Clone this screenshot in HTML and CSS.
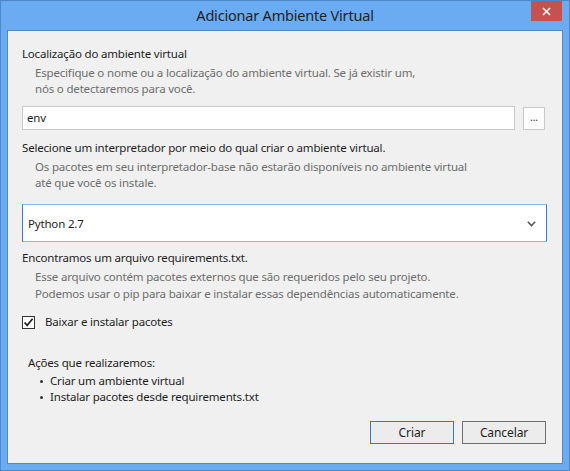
FILE: index.html
```html
<!DOCTYPE html>
<html lang="pt">
<head>
<meta charset="utf-8">
<title>Adicionar Ambiente Virtual</title>
<link rel="stylesheet" href="styles.css">
</head>
<body>
<div class="window">
  <div class="titlebar">
    <span class="spacer"></span>
    <span class="title">Adicionar Ambiente Virtual</span>
    <button class="close" aria-label="Fechar">
      <svg width="9" height="9" viewBox="0 0 9 9"><path d="M1 1 L8 8 M8 1 L1 8" stroke="#fff" stroke-width="1.6" fill="none"/></svg>
    </button>
  </div>
  <div class="content">
    <div class="heading h-first">Localização do ambiente virtual</div>
    <div class="desc">Especifique o nome ou a localização do ambiente virtual. Se já existir um,<br>nós o detectaremos para você.</div>
    <div class="path-row">
      <div class="textbox">env</div>
      <div class="browse">...</div>
    </div>

    <div class="heading h-second">Selecione um interpretador por meio do qual criar o ambiente virtual.</div>
    <div class="desc">Os pacotes em seu interpretador-base não estarão disponíveis no ambiente virtual<br>até que você os instale.</div>
    <div class="select">
      <span>Python 2.7</span>
      <svg class="chevron" width="9" height="6" viewBox="0 0 9 6"><path d="M0.8 0.8 L4.5 4.6 L8.2 0.8" stroke="#555" stroke-width="1.5" fill="none"/></svg>
    </div>

    <div class="heading h-third">Encontramos um arquivo requirements.txt.</div>
    <div class="desc desc-tight">Esse arquivo contém pacotes externos que são requeridos pelo seu projeto.<br>Podemos usar o pip para baixar e instalar essas dependências automaticamente.</div>

    <label class="check-row">
      <span class="checkbox">
        <svg width="11" height="11" viewBox="0 0 11 11"><path d="M1.5 5.5 L4.2 8.4 L9.6 1.8" stroke="#222" stroke-width="1.7" fill="none"/></svg>
      </span>
      <span>Baixar e instalar pacotes</span>
    </label>

    <div class="actions">
      <div class="actions-title">Ações que realizaremos:</div>
      <ul class="action-list">
        <li>Criar um ambiente virtual</li>
        <li>Instalar pacotes desde requirements.txt</li>
      </ul>
    </div>

    <div class="buttons">
      <button class="btn btn-default">Criar</button>
      <button class="btn">Cancelar</button>
    </div>
  </div>
</div>
</body>
</html>
```

FILE: styles.css
```css
* { box-sizing: border-box; }

html, body {
  margin: 0;
  padding: 0;
}

body {
  width: 570px;
  height: 471px;
  font-family: "Noto Sans", "Open Sans", sans-serif;
  font-size: 11.5px;
  letter-spacing: -0.18px;
  color: #1e1e1e;
  background: #6aabf2;
}

.window {
  width: 570px;
  height: 471px;
  border: 1px solid #4f86c6;
  background: #6aabf2;
  display: flex;
  flex-direction: column;
  padding: 0 6px 6px 6px;
}

.titlebar {
  height: 29px;
  flex: none;
  display: grid;
  grid-template-columns: 1fr auto 1fr;
  align-items: start;
  margin: 0 -6px;
}

.title {
  font-size: 14.5px;
  letter-spacing: -0.2px;
  line-height: 29px;
  color: #1f1f1f;
}

.close {
  justify-self: end;
  width: 31px;
  height: 20px;
  margin-right: 7px;
  border: 0;
  padding: 0;
  background: #c75050;
  display: flex;
  align-items: center;
  justify-content: center;
}

.content {
  flex: 1;
  border: 1px solid #5088c8;
  background: #f0f0f0;
  padding: 15px 15px 0 14px;
  display: flex;
  flex-direction: column;
}

.heading {
  line-height: 16px;
  color: #1e1e1e;
}

.h-second { margin-top: 10px; }
.h-third { margin-top: 8px; }

.desc {
  margin-top: 3px;
  padding-left: 13px;
  line-height: 16px;
  color: #6d6d6d;
}

.desc-tight { margin-top: 2px; line-height: 17px; }

.path-row {
  margin-top: 9px;
  display: flex;
  gap: 8px;
  align-items: flex-start;
}

.textbox {
  flex: 1;
  height: 24px;
  border: 1px solid #c8c8c8;
  background: #fff;
  padding: 0 4px;
  line-height: 22px;
}

.browse {
  width: 22px;
  height: 23px;
  margin-top: 1px;
  margin-right: 2px;
  border: 1px solid #c8c8c8;
  background: #fdfdfd;
  font-size: 10px;
  letter-spacing: 0;
  line-height: 18px;
  text-align: center;
  color: #333;
}

.select {
  margin-top: 13px;
  height: 38px;
  border: 1px solid;
  border-color: #86b9ec #2f82d6;
  background: #fff;
  display: flex;
  align-items: center;
  justify-content: space-between;
  padding: 0 10px 0 5px;
}

.chevron { margin-top: 1px; }

.check-row {
  margin-top: 12px;
  display: flex;
  align-items: center;
  gap: 10px;
  line-height: 16px;
}

.checkbox {
  width: 13px;
  height: 13px;
  border: 1px solid #333;
  background: #fff;
  display: flex;
  align-items: center;
  justify-content: center;
}

.actions {
  margin-top: 25px;
  padding-left: 6px;
}

.actions-title { line-height: 16px; }

.action-list {
  list-style: none;
  margin: 2px 0 0 0;
  padding: 0 0 0 12px;
}

.action-list li {
  line-height: 16px;
  position: relative;
  padding-left: 10px;
}

.action-list li::before {
  content: "";
  position: absolute;
  left: 0;
  top: 7px;
  width: 3px;
  height: 3px;
  border-radius: 50%;
  background: #333;
}

.buttons {
  margin-top: 16px;
  display: flex;
  justify-content: flex-end;
  gap: 8px;
  padding-right: 1px;
}

.btn {
  width: 84px;
  height: 23px;
  font-family: inherit;
  font-size: 12px;
  letter-spacing: -0.1px;
  color: #1e1e1e;
  background: #ececec;
  border: 1px solid #707070;
  padding: 0;
}

.btn-default {
  border-color: #2a7ad1;
}
```
